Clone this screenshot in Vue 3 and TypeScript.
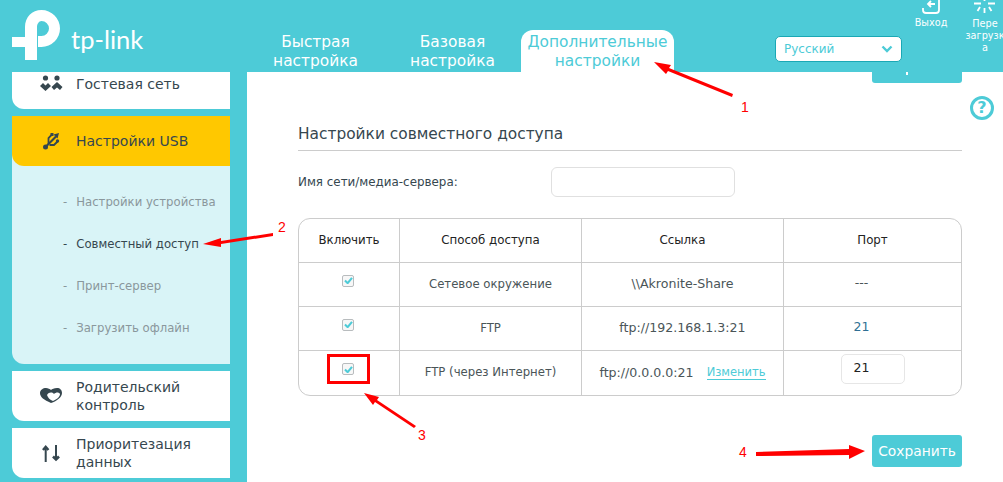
<script setup lang="ts">
interface Row {
  method: string
  link: string
  port: string
  editable?: boolean
}

const rows: Row[] = [
  { method: "Сетевое окружение", link: "\\\\Akronite-Share", port: "---" },
  { method: "FTP", link: "ftp://192.168.1.3:21", port: "21" },
  { method: "FTP (через Интернет)", link: "ftp://0.0.0.0:21", port: "21", editable: true },
]

const subItems = ["Настройки устройства", "Совместный доступ", "Принт-сервер", "Загрузить офлайн"]
</script>

<template>
  <div class="page">
    <header class="top">
      <div class="logo">
        <svg width="48" height="50" viewBox="0 0 48 50">
          <path d="M0 27H13V17C13 7 20 0 29.500 0A18.500 18.500 0 0 1 29.500 37H26V26H29.500A7.500 7.500 0 0 0 29.500 11C27 11 25 14 25 17V50H13V37H0Z" fill="#fff" />
        </svg>
        <span class="logo-text">tp-link</span>
      </div>
      <nav class="tabs">
        <a class="tab">Быстрая<br />настройка</a>
        <a class="tab">Базовая<br />настройка</a>
        <a class="tab active">Дополнительные<br />настройки</a>
      </nav>
      <div class="lang">
        <span>Русский</span>
        <svg width="12" height="8" viewBox="0 0 12 8"><path d="M1.500 1.500 6 6l4.500-4.500" fill="none" stroke="#4dcbd7" stroke-width="2.400" /></svg>
      </div>
      <div class="top-btn logout">
        <svg width="20" height="14" viewBox="0 0 20 14">
          <path d="M2 8v2a3 3 0 0 0 3 3h10a3 3 0 0 0 3-3V0" fill="none" stroke="#fff" stroke-width="1.800" />
          <path d="M14 4H7M10 1 7 4l3 3" fill="none" stroke="#fff" stroke-width="1.800" />
        </svg>
        <span>Выход</span>
      </div>
      <div class="top-btn reboot">
        <svg width="22" height="14" viewBox="0 0 22 14">
          <path d="M0 3.500h7M14 3.500h7M6 7 3.500 11M10.500 8v5M15 7l2.500 4M10.500 0v1" fill="none" stroke="#fff" stroke-width="1.800" />
        </svg>
        <span>Пере<br />загрузк<br />а</span>
      </div>
    </header>

    <div class="body">
      <aside class="side">
        <div class="menu guest">
          <svg class="ico" height="24" viewBox="12 72 64 24">
            <circle cx="45.500" cy="78" r="2.600" fill="#36474f" />
            <circle cx="57" cy="78" r="2.600" fill="#36474f" />
            <path d="M40 86l3-3 2.500 2.500L48 83l3 3-5.500 5zM51.500 87l5.500-5 5.500 5-2.500 3-3-2.500-3 2.500z" fill="#36474f" />
          </svg>
          <span>Гостевая сеть</span>
        </div>
        <div class="group">
          <div class="menu usb">
            <svg class="ico" height="24" viewBox="12 129 64 24">
              <circle cx="45.500" cy="147" r="2.500" fill="#36474f" />
              <path d="M46 146.500 56 136.500" fill="none" stroke="#36474f" stroke-width="2.200" />
              <path d="M59 133l-5.500 1.500 4 4z" fill="#36474f" />
              <path d="M48.500 144v-6l3.500-3.500M49.500 145h4.500l3.500-3.500" fill="none" stroke="#36474f" stroke-width="1.800" />
              <rect x="50.500" y="133" width="3" height="3" fill="#36474f" />
              <circle cx="57.500" cy="141" r="1.700" fill="#36474f" />
            </svg>
            <span>Настройки USB</span>
          </div>
          <ul class="sub">
            <li v-for="(item, i) in subItems" :key="item" :class="{ current: i === 1 }">
              <span class="dash">-</span>{{ item }}
            </li>
          </ul>
        </div>
        <div class="menu">
          <svg class="ico" height="24" viewBox="12 384 64 24">
            <path d="M51 403C44 400 40 397 40 393C40 390 43 388 46 388C48 388 50 389 51 390C52 389 54 388 57 388C60 388 62 390 62 393C62 397 57 401 51 403Z" fill="#36474f" />
            <path d="M47 395C49 392 52 392 54 394C56 392 59 392 60 394C60 397 57 399 53 401C50 400 48 398 47 395Z" fill="#fff" />
          </svg>
          <span>Родительский<br />контроль</span>
        </div>
        <div class="menu">
          <svg class="ico" height="24" viewBox="12 441 64 24">
            <path d="M45.700 447V462M56 445V459" fill="none" stroke="#36474f" stroke-width="2" />
            <path d="M43 450l2.700-3 2.700 3M53 456.500l3 3 3-3" fill="none" stroke="#36474f" stroke-width="2.600" />
          </svg>
          <span>Приоритезация<br />данных</span>
        </div>
      </aside>

      <main class="main">
        <div class="top-tab"></div>
        <div class="help">?</div>
        <h2>Настройки совместного доступа</h2>
        <div class="field">
          <label>Имя сети/медиа-сервера:</label>
          <div class="input"></div>
        </div>
        <div class="table">
          <div class="cell head">Включить</div>
          <div class="cell head">Способ доступа</div>
          <div class="cell head">Ссылка</div>
          <div class="cell head">Порт</div>
          <template v-for="row in rows" :key="row.method">
            <div class="cell">
              <span class="check">
                <svg width="9" height="7" viewBox="0 0 10 8"><path d="M1 4l3 3 5-6" fill="none" stroke="#4dcbd7" stroke-width="2.400" /></svg>
              </span>
            </div>
            <div class="cell text">{{ row.method }}</div>
            <div class="cell text">
              <span class="link">{{ row.link }}</span>
              <a v-if="row.editable" class="edit">Изменить</a>
            </div>
            <div class="cell port">
              <span v-if="row.editable" class="port-input">21</span>
              <span v-else class="port-value" :class="{ blue: row.port === '21' }">{{ row.port }}</span>
            </div>
          </template>
        </div>
        <div class="actions">
          <button class="save">Сохранить</button>
        </div>
      </main>
    </div>

    <svg class="marks" width="1003" height="482" viewBox="0 0 1003 482">
      <g fill="#f00" stroke="none">
        <path d="M654 62l17 3-2 3 64 26-1 3-64-26-2 3z" />
        <path d="M203 244l18-6v3l52-8v3l-52 8v3z" />
        <path d="M364 393l15 4-2 3 39 26-2 2-39-26-2 3z" />
        <path d="M865 451l-16-6v4l-93 3v4l93-1v4z" />
      </g>
      <rect x="328.500" y="355.500" width="40" height="27" fill="none" stroke="#f00" stroke-width="3" />
      <g fill="#f00" font-family="'Liberation Sans', sans-serif" font-size="14">
        <text x="741" y="112">1</text>
        <text x="278" y="232">2</text>
        <text x="418" y="440">3</text>
        <text x="739" y="457">4</text>
      </g>
    </svg>
  </div>
</template>

<style scoped>
.page {
  position: relative;
  width: 1003px;
  height: 482px;
  overflow: hidden;
  background: #4dcbd7;
  font-family: "DejaVu Sans", Verdana, sans-serif;
  color: #36474f;
}

.top {
  position: relative;
  height: 72px;
  display: flex;
  align-items: flex-end;
}

.logo {
  position: absolute;
  left: 12px;
  top: 10px;
  display: flex;
}

.logo-text {
  font-family: "Lato", sans-serif;
  color: #fff;
  font-size: 25.500px;
  margin-left: 11px;
  margin-top: 13px;
  line-height: 32px;
}

.tabs {
  display: flex;
  margin-left: 247px;
}

.tab {
  width: 137px;
  height: 42px;
  text-align: center;
  font-size: 15.400px;
  line-height: 19px;
  color: #fff;
  padding-top: 3px;
  box-sizing: border-box;
  border-radius: 12px 12px 0 0;
}

.tab.active {
  width: 153px;
  background: #fff;
  color: #4dcbd7;
}

.lang {
  width: 127px;
  height: 26px;
  margin-left: 101px;
  margin-bottom: 10px;
  box-sizing: border-box;
  padding: 0 8px;
  display: flex;
  align-items: center;
  justify-content: space-between;
  background: #fff;
  border: 1px solid #1aa8b5;
  border-radius: 5px;
  color: #4dcbd7;
  font-size: 12px;
}

.top-btn {
  position: absolute;
  top: 0;
  display: flex;
  flex-direction: column;
  align-items: center;
  color: #fff;
  font-size: 9.700px;
  line-height: 12px;
  text-align: center;
}

.top-btn span {
  margin-top: 3px;
}

.logout {
  left: 911px;
  width: 40px;
}

.reboot {
  left: 965px;
  width: 40px;
}

.reboot span {
  margin-top: 4px;
}

.body {
  display: flex;
  height: 410px;
}

.side {
  width: 247px;
  flex: none;
  padding: 0 17px 0 12px;
  box-sizing: border-box;
  display: flex;
  flex-direction: column;
  gap: 7px;
}

.menu {
  height: 50px;
  flex: none;
  background: #fff;
  border-bottom-left-radius: 12px;
  display: flex;
  align-items: center;
  font-size: 14px;
  line-height: 18px;
}

.menu .ico {
  width: 64px;
  flex: none;
}

.guest {
  height: 24px;
  padding-bottom: 13px;
}

.usb {
  background: #ffc800;
}

.group {
  background: #d9f4f7;
  border-bottom-left-radius: 12px;
}

.sub {
  margin: 0;
  padding: 15px 0 0 51px;
  height: 198px;
  box-sizing: border-box;
  list-style: none;
  font-size: 11.700px;
  color: #8a979c;
}

.sub li {
  height: 42px;
  line-height: 42px;
}

.sub li.current {
  color: #36474f;
}

.dash {
  margin-right: 9px;
}

.main {
  position: relative;
  flex: 1;
  background: #fff;
  padding: 52px 41px 0 51px;
}

.top-tab {
  position: absolute;
  top: 0;
  left: 625px;
  width: 90px;
  height: 11px;
  background: #4dcbd7;
  border-radius: 0 0 3px 3px;
}

.top-tab::after {
  content: "";
  position: absolute;
  left: 34px;
  top: 0;
  width: 2px;
  height: 3px;
  background: #fff;
}

.help {
  position: absolute;
  top: 24px;
  left: 723px;
  width: 24px;
  height: 24px;
  box-sizing: border-box;
  border: 3px solid #4dcbd7;
  border-radius: 50%;
  color: #4dcbd7;
  font-size: 16px;
  font-weight: 700;
  line-height: 18px;
  text-align: center;
}

h2 {
  margin: 0;
  height: 26px;
  border-bottom: 1px solid #ccc;
  font-size: 15.400px;
  font-weight: 400;
  line-height: 21px;
}

.field {
  display: flex;
  align-items: center;
  margin-top: 16px;
  font-size: 11.900px;
}

.field label {
  width: 253px;
}

.input {
  width: 184px;
  height: 30px;
  box-sizing: border-box;
  border: 1px solid #e0e0e0;
  border-radius: 6px;
}

.table {
  display: grid;
  grid-template-columns: 101px 182px 202px 1fr;
  grid-auto-rows: 44px;
  margin-top: 21px;
  border: 1px solid #ccc;
  border-radius: 12px;
  font-size: 11.800px;
}

.cell {
  display: flex;
  align-items: center;
  justify-content: center;
  border-right: 1px solid #ccc;
  border-bottom: 1px solid #ccc;
}

.cell:nth-child(4n) {
  border-right: 0;
}

.cell:nth-last-child(-n + 4) {
  border-bottom: 0;
}

.head {
  color: #222;
  padding-bottom: 2px;
  box-sizing: border-box;
}

.text {
  color: #4a5558;
  font-size: 11.700px;
  padding-bottom: 2px;
  box-sizing: border-box;
}

.check {
  width: 12px;
  height: 12px;
  box-sizing: border-box;
  border: 1px solid #b8bcbe;
  border-radius: 2px;
  background: #f7f7f7;
  display: flex;
  align-items: center;
  justify-content: center;
  margin: 0 2px 8px 0;
}

.link {
  font-size: 12.600px;
}

.edit {
  margin-left: 13px;
  font-size: 11.500px;
  color: #4dcbd7;
  border-bottom: 1px solid #4dcbd7;
}

.port-value {
  margin: 0 22px 5px 0;
  color: #4a5558;
  font-size: 12.500px;
}

.port-value.blue {
  color: #2f6f94;
}

.port-input {
  width: 64px;
  height: 30px;
  box-sizing: border-box;
  border: 1px solid #e6e6e6;
  border-radius: 5px;
  padding-left: 12px;
  line-height: 26px;
  color: #222;
  font-size: 12.500px;
  margin-bottom: 8px;
}

.actions {
  display: flex;
  justify-content: flex-end;
  margin-top: 39px;
}

.save {
  width: 90px;
  height: 32px;
  border: 0;
  border-radius: 3px;
  background: #4dcbd7;
  color: #fff;
  font: 13.800px "DejaVu Sans", Verdana, sans-serif;
  padding: 0;
}

.marks {
  position: absolute;
  left: 0;
  top: 0;
  pointer-events: none;
}
</style>
